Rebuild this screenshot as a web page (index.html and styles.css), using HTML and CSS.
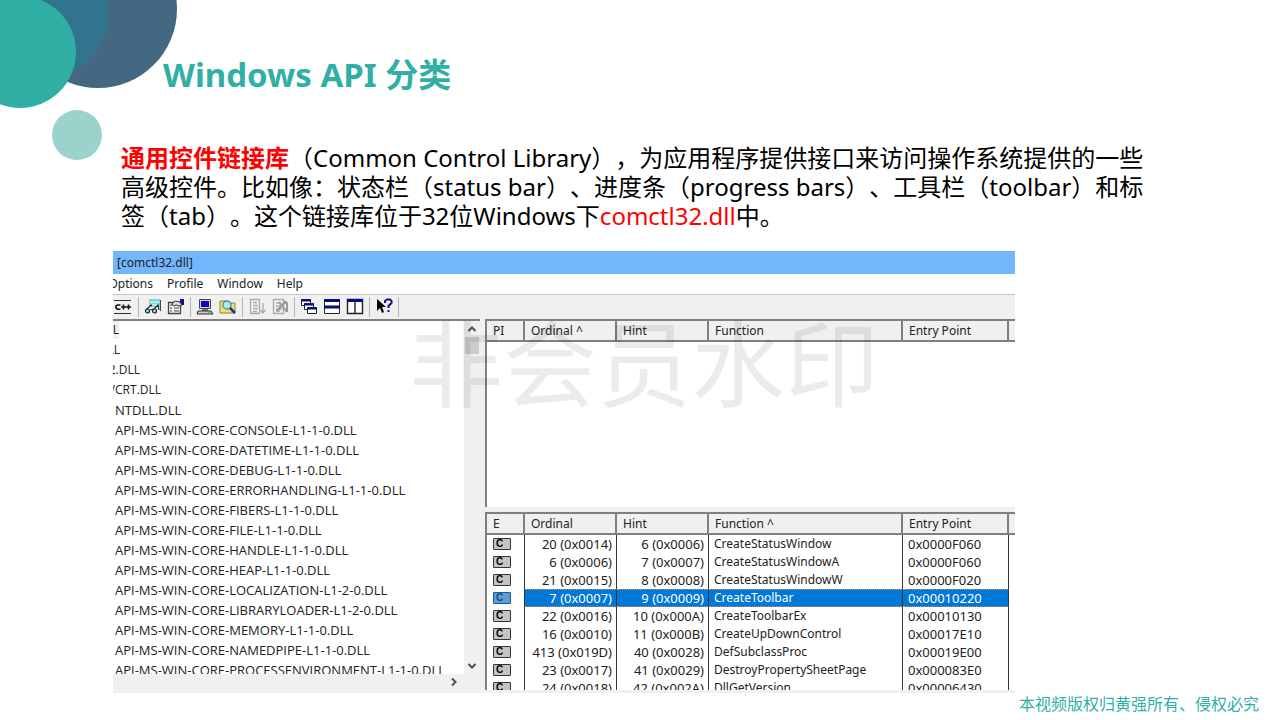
FILE: index.html
```html
<!DOCTYPE html>
<html lang="zh-CN">
<head>
<meta charset="utf-8">
<title>Windows API 分类</title>
<link rel="stylesheet" href="styles.css">
</head>
<body>
<div class="slide">
  <svg class="bubbles" width="180" height="162" viewBox="0 0 180 162" aria-hidden="true">
    <circle cx="98" cy="9" r="79" fill="#456882"/>
    <circle cx="39" cy="10" r="70" fill="#31748e"/>
    <circle cx="20" cy="52" r="56" fill="#30b0a4"/>
    <circle cx="77" cy="135" r="25" fill="#9bd3cc"/>
  </svg>
  <h1 class="title">Windows API 分类</h1>
  <p class="intro"><strong>通用控件链接库</strong>（Common Control Library），为应用程序提供接口来访问操作系统提供的一些<br>高级控件。比如像：状态栏（status bar）、进度条（progress bars）、工具栏（toolbar）和标<br>签（tab）。这个链接库位于32位Windows下<span class="dll">comctl32.dll</span>中。</p>

  <section class="viewer">
    <div class="caption">[comctl32.dll]</div>
    <nav class="menu">
      <button class="cut cut-options">Options</button>
      <button>Profile</button>
      <button>Window</button>
      <button>Help</button>
    </nav>
    <div class="toolbar">
      <button aria-label="Undecorate C++"><svg width="20" height="18" viewBox="0 0 20 18"><path d="M1 2.500h17M1 15.500h17" stroke="#333" stroke-width="1.200"/><path d="M7.500 7H4.500L3 8v2l1.500 1.200h3M10.500 6.500v5M8 9h5M15.500 6.500v5M13 9h5" fill="none" stroke="#111" stroke-width="1.600"/></svg></button>
      <i class="sep"></i>
      <button aria-label="View"><svg width="18" height="18" viewBox="0 0 18 18"><path d="M5 1h11v8H5z" fill="#7fd4d6"/><path d="M6 4h9M8 7h7" stroke="#fff"/><path d="M16.500 2v11" stroke="#444"/><path d="M2 12l5-5 1 1M9 12l5-5 1 5" fill="none" stroke="#222" stroke-width="1.200"/><circle cx="3.500" cy="13" r="2" fill="#8eeaea" stroke="#222" stroke-width="1.200"/><circle cx="10.500" cy="13" r="2" fill="#8eeaea" stroke="#222" stroke-width="1.200"/><path d="M6 12l3-1" stroke="#222"/></svg></button>
      <button aria-label="Properties"><svg width="18" height="18" viewBox="0 0 18 18"><path d="M1.500 4.500h12v11h-12z" fill="#f3f3f3" stroke="#444" stroke-width="1.300"/><path d="M3 7h3M3 10h2M7 10h5M3 13h2M7 13h5" stroke="#444"/><path d="M5 6l3-3 5 1 2 3-3 1-3-1-2 1z" fill="#ddd" stroke="#333"/><path d="M13 1h4v6h-2l-2-3z" fill="#11117f"/></svg></button>
      <i class="sep"></i>
      <button aria-label="System information"><svg width="18" height="18" viewBox="0 0 18 18"><path d="M3.500 1.500h11v9h-11z" fill="#d7d7cd" stroke="#444"/><path d="M5 3h8v6H5z" fill="#0a0aba"/><path d="M6 11h6v2H6z" fill="#777"/><path d="M2 13h13l2 3H1z" fill="#c8c8c8" stroke="#333"/><path d="M12 14h3" stroke="#1a9b40"/></svg></button>
      <button aria-label="Search"><svg width="18" height="18" viewBox="0 0 18 18"><path d="M1 3h6l2 2h7v10H1z" fill="#f4df6c" stroke="#88824b"/><circle cx="8" cy="7" r="4" fill="#a5edf0" stroke="#4f8992" stroke-width="1.300"/><path d="M11 10l5 5" stroke="#1732a5" stroke-width="2.500"/></svg></button>
      <i class="sep"></i>
      <button aria-label="Expand all" disabled><svg width="18" height="18" viewBox="0 0 18 18"><path d="M2.500 1.500h9v14h-9zM5 4.500h4M5 7.500h5M5 10.500h5M5 13.500h4M15 5v9M12.500 12l2.500 3 2.500-3" fill="none" stroke="#aaa" stroke-width="1.300"/></svg></button>
      <button aria-label="Collapse all" disabled><svg width="18" height="18" viewBox="0 0 18 18"><path d="M2.500 1.500h10v14h-10zM5 5h5M5 8h5M5 11h6M5 13h4" fill="none" stroke="#aaa" stroke-width="1.300"/><path d="M6 13l9-10M8 4l8 10M12 4l4 1v9" fill="none" stroke="#999" stroke-width="2"/></svg></button>
      <i class="sep"></i>
      <button aria-label="Cascade"><svg width="18" height="18" viewBox="0 0 18 18"><g fill="#fff" stroke="#222"><path d="M1.500 1.500h9v6h-9z"/><path d="M4.500 5.500h9v6h-9z"/><path d="M7.500 9.500h9v6h-9z"/></g><path d="M1 2.500h10M4 6.500h10M7 10.500h10" stroke="#090981" stroke-width="2"/></svg></button>
      <button aria-label="Tile horizontally"><svg width="18" height="18" viewBox="0 0 18 18"><path d="M1.500 1.500h15v14h-15z" fill="#fff" stroke="#222"/><path d="M1 2.500h16M1 9h16" stroke="#090981" stroke-width="3"/></svg></button>
      <button aria-label="Tile vertically"><svg width="18" height="18" viewBox="0 0 18 18"><path d="M1.500 1.500h15v14h-15zM9 2v13" fill="#fff" stroke="#222" stroke-width="1.400"/><path d="M1 2.500h16" stroke="#090981" stroke-width="3"/></svg></button>
      <i class="sep"></i>
      <button aria-label="Context help"><svg width="18" height="18" viewBox="0 0 18 18"><path d="M2 1v12l3-3 2 5 2-1-2-5h4z" fill="#000"/><path d="M10 5V3l2-1.500h3L16.500 3v2l-3 3v2M13.500 12v2" fill="none" stroke="#11118e" stroke-width="2"/></svg></button>
      <i class="sep"></i>
    </div>

    <div class="panes">
      <div class="tree">
        <ul class="modules">
          <li><span class="cut cut-a">DLL</span></li>
          <li><span class="cut cut-b">DLL</span></li>
          <li><span class="cut cut-c">2.DLL</span></li>
          <li><span class="cut cut-d">MSVCRT.DLL</span></li>
          <li>NTDLL.DLL</li>
          <li>API-MS-WIN-CORE-CONSOLE-L1-1-0.DLL</li>
          <li>API-MS-WIN-CORE-DATETIME-L1-1-0.DLL</li>
          <li>API-MS-WIN-CORE-DEBUG-L1-1-0.DLL</li>
          <li>API-MS-WIN-CORE-ERRORHANDLING-L1-1-0.DLL</li>
          <li>API-MS-WIN-CORE-FIBERS-L1-1-0.DLL</li>
          <li>API-MS-WIN-CORE-FILE-L1-1-0.DLL</li>
          <li>API-MS-WIN-CORE-HANDLE-L1-1-0.DLL</li>
          <li>API-MS-WIN-CORE-HEAP-L1-1-0.DLL</li>
          <li>API-MS-WIN-CORE-LOCALIZATION-L1-2-0.DLL</li>
          <li>API-MS-WIN-CORE-LIBRARYLOADER-L1-2-0.DLL</li>
          <li>API-MS-WIN-CORE-MEMORY-L1-1-0.DLL</li>
          <li>API-MS-WIN-CORE-NAMEDPIPE-L1-1-0.DLL</li>
          <li class="last">API-MS-WIN-CORE-PROCESSENVIRONMENT-L1-1-0.DLL</li>
        </ul>
        <div class="vbar">
          <button aria-label="Scroll up"><svg width="10" height="8" viewBox="0 0 10 8"><path d="M1.500 6L5 2.500 8.500 6" fill="none" stroke="#505050" stroke-width="2"/></svg></button>
          <div class="thumb"></div>
          <button class="down" aria-label="Scroll down"><svg width="10" height="8" viewBox="0 0 10 8"><path d="M1.500 2L5 5.500 8.500 2" fill="none" stroke="#505050" stroke-width="2"/></svg></button>
        </div>
        <div class="hbar">
          <button aria-label="Scroll right"><svg width="8" height="10" viewBox="0 0 8 10"><path d="M2 1.500L5.500 5 2 8.500" fill="none" stroke="#505050" stroke-width="2"/></svg></button>
        </div>
      </div>

      <div class="lists">
        <div class="list imports">
          <table>
            <colgroup><col class="c-icon"><col class="c-num"><col class="c-num"><col><col class="c-entry"><col class="c-rest"></colgroup>
            <thead><tr><th>PI</th><th>Ordinal ^</th><th>Hint</th><th>Function</th><th>Entry Point</th><th></th></tr></thead>
          </table>
        </div>
        <div class="list exports">
          <table>
            <colgroup><col class="c-icon"><col class="c-num"><col class="c-num"><col><col class="c-entry"><col class="c-rest"></colgroup>
            <thead><tr><th>E</th><th>Ordinal</th><th>Hint</th><th>Function ^</th><th>Entry Point</th><th></th></tr></thead>
            <tbody>
              <tr><td><span class="tag">C</span></td><td>20 (0x0014)</td><td>6 (0x0006)</td><td>CreateStatusWindow</td><td>0x0000F060</td><td></td></tr>
              <tr><td><span class="tag">C</span></td><td>6 (0x0006)</td><td>7 (0x0007)</td><td>CreateStatusWindowA</td><td>0x0000F060</td><td></td></tr>
              <tr><td><span class="tag">C</span></td><td>21 (0x0015)</td><td>8 (0x0008)</td><td>CreateStatusWindowW</td><td>0x0000F020</td><td></td></tr>
              <tr class="selected"><td><span class="tag">C</span></td><td>7 (0x0007)</td><td>9 (0x0009)</td><td>CreateToolbar</td><td>0x00010220</td><td></td></tr>
              <tr><td><span class="tag">C</span></td><td>22 (0x0016)</td><td>10 (0x000A)</td><td>CreateToolbarEx</td><td>0x00010130</td><td></td></tr>
              <tr><td><span class="tag">C</span></td><td>16 (0x0010)</td><td>11 (0x000B)</td><td>CreateUpDownControl</td><td>0x00017E10</td><td></td></tr>
              <tr><td><span class="tag">C</span></td><td>413 (0x019D)</td><td>40 (0x0028)</td><td>DefSubclassProc</td><td>0x00019E00</td><td></td></tr>
              <tr><td><span class="tag">C</span></td><td>23 (0x0017)</td><td>41 (0x0029)</td><td>DestroyPropertySheetPage</td><td>0x000083E0</td><td></td></tr>
              <tr><td><span class="tag">C</span></td><td>24 (0x0018)</td><td>42 (0x002A)</td><td>DllGetVersion</td><td>0x00006430</td><td></td></tr>
            </tbody>
          </table>
        </div>
      </div>
    </div>
  </section>

  <footer class="copyright">本视频版权归黄强所有、侵权必究</footer>
  <div class="watermark" aria-hidden="true">非会员水印</div>
</div>
</body>
</html>
```

FILE: styles.css
```css
* { box-sizing: border-box; }

body {
  margin: 0;
  background: #fff;
  color: #000;
  font-family: "Noto Sans", "Noto Sans CJK SC", sans-serif;
  text-spacing-trim: space-all;
}

button {
  margin: 0;
  padding: 0;
  border: 0;
  background: none;
  color: inherit;
  font: inherit;
}

svg { display: block; }

.slide {
  position: relative;
  min-height: 100vh;
  overflow: hidden;
}

.bubbles {
  position: absolute;
  top: 0;
  left: 0;
}

.title {
  margin: 0;
  padding: 51px 0 0 163px;
  color: #30b0a4;
  font-size: 33px;
  line-height: 48px;
  font-weight: 700;
}

.intro {
  margin: 0;
  padding: 44px 0 21px 121px;
  font-size: 24px;
  line-height: 29px;
  white-space: nowrap;
}

.intro strong, .dll { color: #f00; }

/* Dependency viewer */
.viewer {
  margin: 0 265px 0 113px;
  overflow: hidden;
  background: #f0f0f0;
  color: #222;
  font-size: 12px;
}

.caption {
  padding-left: 4px;
  background: #73b6fb;
  line-height: 23px;
}

.menu {
  display: flex;
  gap: 14px;
  height: 20px;
  background: #fff;
  line-height: 20px;
}

.cut {
  display: flex;
  justify-content: flex-end;
  overflow: hidden;
  font-size: 12px;
}

.cut-options { width: 40px; }
.cut-a { width: 6px; background: #f0f0f0; }
.cut-b { width: 7px; }
.cut-c { width: 27px; }
.cut-d { width: 48px; }

.toolbar {
  display: flex;
  align-items: center;
  gap: 5px;
  height: 25px;
  border-top: 1px solid #c4c4c4;
}

.toolbar .sep {
  width: 1px;
  height: 20px;
  background: #b5b5b5;
}

.panes { display: flex; }

.tree {
  flex: none;
  width: 367px;
  display: grid;
  grid-template-columns: 1fr 16px;
  border-top: 2px solid #808080;
}

.modules {
  margin: 0;
  padding: 0;
  background: #fff;
  font-family: "Open Sans", sans-serif;
  font-size: 13px;
  list-style: none;
  white-space: nowrap;
  overflow: hidden;
}

.modules li {
  height: 20px;
  padding-left: 2px;
  line-height: 18px;
}

.modules li:nth-child(-n+4) { padding-left: 0; }
.modules .last { height: 13px; overflow: hidden; }

.vbar {
  display: flex;
  flex-direction: column;
  align-items: center;
  padding: 4px 0;
}

.vbar .thumb {
  width: 14px;
  height: 17px;
  margin-top: 4px;
  background: #cdcdcd;
}

.vbar .down { margin-top: auto; }

.hbar {
  grid-column: 1 / -1;
  display: flex;
  justify-content: flex-end;
  padding: 3px 22px 6px 0;
}

.lists {
  flex: 1;
  min-width: 0;
  display: flex;
  flex-direction: column;
  gap: 5px;
  margin-left: 5px;
}

.list {
  overflow: hidden;
  border-top: 2px solid #808080;
  border-left: 2px solid #808080;
  background: #fff;
}

.imports { height: 188px; }
.exports { height: 178px; margin-bottom: 2px; }

table {
  width: 100%;
  border-spacing: 0;
  table-layout: fixed;
}

.c-icon { width: 38px; }
.c-num { width: 92px; }
.c-entry { width: 106px; }
.c-rest { width: 6px; }

th {
  height: 21px;
  padding: 0 6px;
  border-right: 2px solid #808080;
  border-bottom: 2px solid #808080;
  background: #f0f0f0;
  font-weight: 400;
  line-height: 18px;
  text-align: left;
}

td {
  height: 18px;
  padding: 0 3px;
  border-right: 1px solid #333;
  line-height: 18px;
  white-space: nowrap;
}

td:nth-child(1) { padding-left: 6px; }

td:nth-child(2), td:nth-child(3) {
  padding-right: 4px;
  font-size: 13px;
  text-align: right;
}

td:nth-child(4), td:nth-child(5) { padding-left: 5px; }
td:nth-child(5) { font-size: 13px; }
th:last-child, td:last-child { border-right: 0; }

.selected td:nth-child(n+2):nth-child(-n+5) {
  border-top: 1px dotted #d98a50;
  border-bottom: 1px dotted #d98a50;
  background: #0078d7;
  color: #fff;
  line-height: 16px;
}

.tag {
  display: block;
  width: 18px;
  height: 12px;
  padding-left: 2px;
  border: 1px solid #333;
  border-radius: 1px;
  background: #c4c4c4;
  color: #000;
  font-family: "Liberation Sans", sans-serif;
  font-size: 10px;
  font-weight: 700;
  line-height: 10px;
}

.selected .tag {
  border-color: #1d5c92;
  background: #5c9dd2;
  color: #0b4f88;
}

.copyright {
  position: absolute;
  right: 21px;
  bottom: 4px;
  color: #30b0a4;
  font-size: 16px;
  line-height: 24px;
}

.watermark {
  position: absolute;
  top: 316px;
  left: 0;
  right: 0;
  padding-left: 8px;
  color: rgba(0, 0, 0, 0.08);
  font-size: 94px;
  line-height: 96px;
  text-align: center;
  pointer-events: none;
}
```
